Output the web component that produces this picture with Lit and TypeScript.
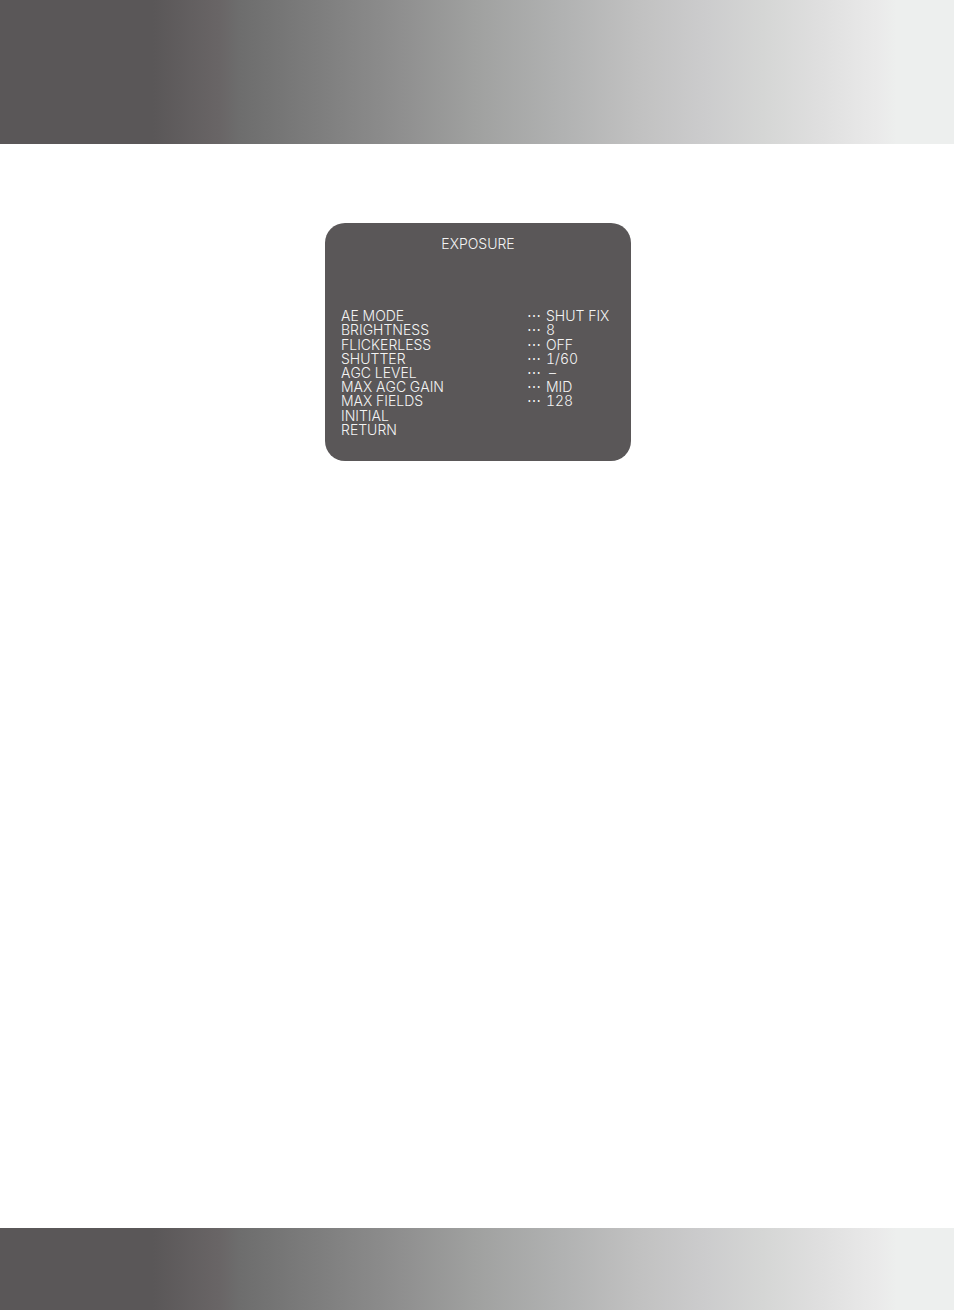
import { LitElement, html, css } from "lit";
import { customElement } from "lit/decorators.js";

interface Setting {
  label: string;
  value?: string;
}

const SETTINGS: Setting[] = [
  { label: "AE MODE", value: "SHUT FIX" },
  { label: "BRIGHTNESS", value: "8" },
  { label: "FLICKERLESS", value: "OFF" },
  { label: "SHUTTER", value: "1/60" },
  { label: "AGC LEVEL", value: "–" },
  { label: "MAX AGC GAIN", value: "MID" },
  { label: "MAX FIELDS", value: "128" },
  { label: "INITIAL" },
  { label: "RETURN" },
];

@customElement("exposure-menu")
export class ExposureMenu extends LitElement {
  static styles = css`
    :host {
      display: block;
      box-sizing: border-box;
      width: 306px;
      max-width: 100%;
      padding: 13px 16px 24px;
      border-radius: 20px;
      background: #5a5758;
      color: #f4f4f4;
      font: 300 14px/14px Inter, "Liberation Sans", sans-serif;
      font-variant-numeric: tabular-nums;
      font-kerning: none;
    }
    .title {
      margin: 0 0 57px;
      font-size: inherit;
      font-weight: inherit;
      line-height: 16px;
      text-align: center;
    }
    .settings {
      width: 100%;
      height: 128px;
      border-collapse: collapse;
      table-layout: fixed;
    }
    .label,
    .dots,
    .value {
      padding: 0;
      font-weight: inherit;
      text-align: left;
      white-space: nowrap;
    }
    .dots {
      width: 19px;
    }
    .value {
      width: 69px;
    }
    .empty {
      padding-left: 3px;
    }
  `;

  render() {
    return html`
      <h1 class="title">EXPOSURE</h1>
      <table class="settings">
        <tbody>
          ${SETTINGS.map(
            ({ label, value }) => html`<tr>
              <th class="label" scope="row">${label}</th>
              <td class="dots">${value ? "⋯" : ""}</td>
              <td class="value ${value === "–" ? "empty" : ""}">${value ?? ""}</td>
            </tr>`
          )}
        </tbody>
      </table>
    `;
  }
}

@customElement("app-root")
export class AppRoot extends LitElement {
  static styles = css`
    :host {
      display: flex;
      flex-direction: column;
      min-height: 100vh;
      background: #fff;
    }
    .band {
      flex: none;
      background: linear-gradient(
        to right,
        #5a5758 16%,
        #696566 23%,
        #6d6d6d 25%,
        #7f7f7f 34%,
        #8f8f8f 42%,
        #a0a1a0 50%,
        #b1b2b2 59%,
        #c1c1c1 67%,
        #cccccd 74%,
        #d5d6d5 80%,
        #dfdfdf 86%,
        #eaeaea 92%,
        #edefee 94%
      );
    }
    .top {
      height: 144px;
    }
    .bottom {
      height: 82px;
    }
    .content {
      flex: 1;
      display: flex;
      justify-content: center;
      align-items: flex-start;
      padding: 79px 16px 79px 18px;
    }
  `;

  render() {
    return html`
      <header class="band top"></header>
      <main class="content"><exposure-menu></exposure-menu></main>
      <footer class="band bottom"></footer>
    `;
  }
}
